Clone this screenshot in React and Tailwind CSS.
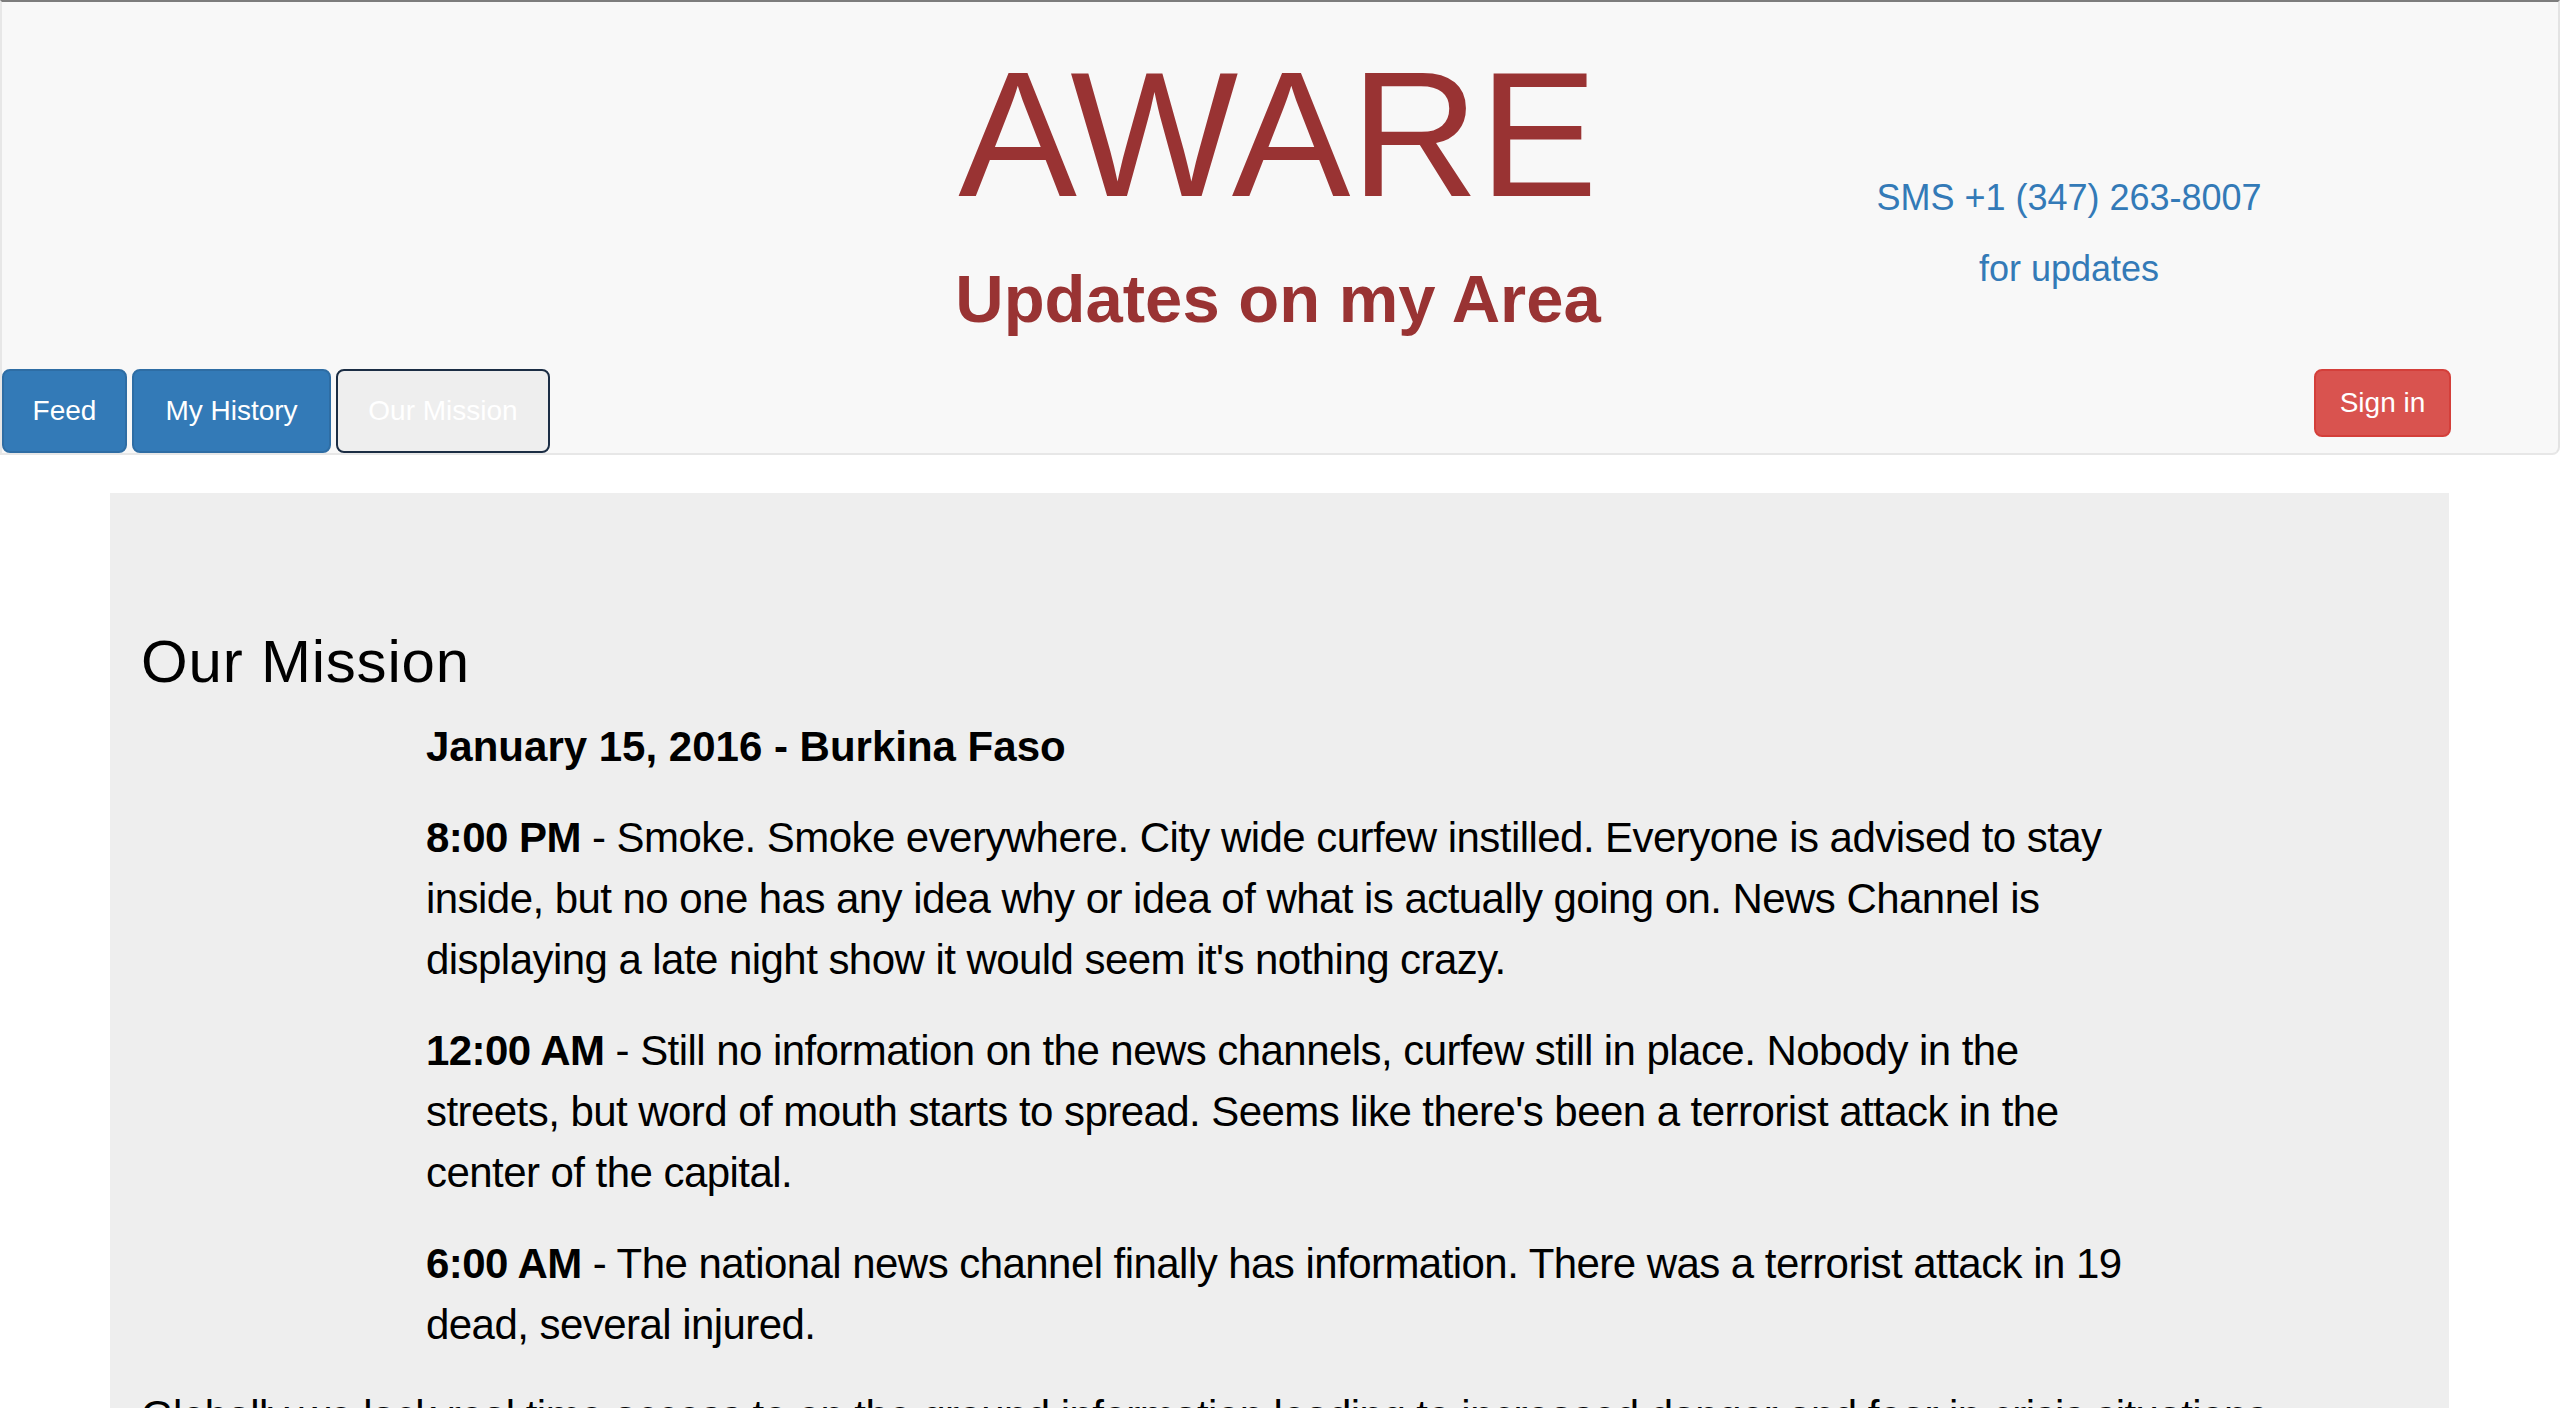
import React from 'react'

const font = { fontFamily: '"Liberation Sans", Arial, Helvetica, sans-serif' }

const entries = [
  {
    time: '8:00 PM',
    lines: [
      ' - Smoke. Smoke everywhere. City wide curfew instilled. Everyone is advised to stay',
      "inside, but no one has any idea why or idea of what is actually going on. News Channel is",
      "displaying a late night show it would seem it's nothing crazy.",
    ],
  },
  {
    time: '12:00 AM',
    lines: [
      ' - Still no information on the news channels, curfew still in place. Nobody in the',
      "streets, but word of mouth starts to spread. Seems like there's been a terrorist attack in the",
      'center of the capital.',
    ],
  },
  {
    time: '6:00 AM',
    lines: [
      ' - The national news channel finally has information. There was a terrorist attack in 19',
      'dead, several injured.',
    ],
  },
]

const Header = () => (
  <div className="border-t-2 border-t-[#7d7d7d] border-l-2 border-r-2 border-b-2 border-l-[#e7e7e7] border-r-[#e3e3e3] border-b-[#e7e7e7] rounded-br-[8px] bg-[#f8f8f8]">
    <div className="flex items-start">
      <div className="w-[850px] shrink-0" />
      <div className="w-[852px] shrink-0 pt-[44px] text-center text-[#993333]">
        <div className="text-[178px] leading-none">AWARE</div>
        <div className="mt-[38px] text-[67px] leading-[74px] font-bold">Updates on my Area</div>
      </div>
      <div className="w-[730px] shrink-0 pt-[176px] text-center text-[36px] leading-[40px] text-[#337ab7]">
        <div>SMS +1 (347) 263-8007</div>
        <div className="mt-[31px]">for updates</div>
      </div>
    </div>

    {/* nav buttons */}
    <div className="mt-[33px] flex items-start justify-between">
      <div className="flex gap-[5px]">
        <button className="h-[84px] w-[125px] rounded-[8px] border-2 border-[#2e6da4] bg-[#337ab7] text-[28px] text-white">
          Feed
        </button>
        <button className="h-[84px] w-[199px] rounded-[8px] border-2 border-[#2e6da4] bg-[#337ab7] text-[28px] text-white">
          My History
        </button>
        <button className="h-[84px] w-[214px] rounded-[8px] border-2 border-[#1b2d44] bg-[#eeeeee] text-[28px] text-white">
          Our Mission
        </button>
      </div>
      <button className="mr-[107px] h-[68px] w-[137px] rounded-[8px] border-2 border-[#d43f3a] bg-[#d9534f] text-[28px] text-white">
        Sign in
      </button>
    </div>
  </div>
)

const App = () => {
  return (
    <div className="min-h-screen bg-white text-black" style={font}>
      <Header />

      <div className="ml-[110px] mt-[38px] w-[2339px] bg-[#eeeeee] pl-[31px] pr-[31px] pt-[136px] pb-[96px]">
        <h2 className="text-[60px] leading-[66px] font-medium tracking-[0.8px]">Our Mission</h2>

        <div className="ml-[285px] text-[42px] leading-[61px] tracking-[-0.55px]">
          <p className="mt-[21px] mb-[30px] font-bold tracking-normal">January 15, 2016 - Burkina Faso</p>
          {entries.map((entry) => (
            <p key={entry.time} className="mb-[30px] whitespace-nowrap">
              <strong className="font-bold">{entry.time}</strong>
              {entry.lines.map((line, i) => (
                <React.Fragment key={i}>
                  {i > 0 && <br />}
                  {line}
                </React.Fragment>
              ))}
            </p>
          ))}
        </div>

        <p className="text-[42px] leading-[61px] tracking-[-0.55px]">
          Globally we lack real time access to on the ground information leading to increased danger and fear in crisis situations.
        </p>
      </div>
    </div>
  )
}

export default App
